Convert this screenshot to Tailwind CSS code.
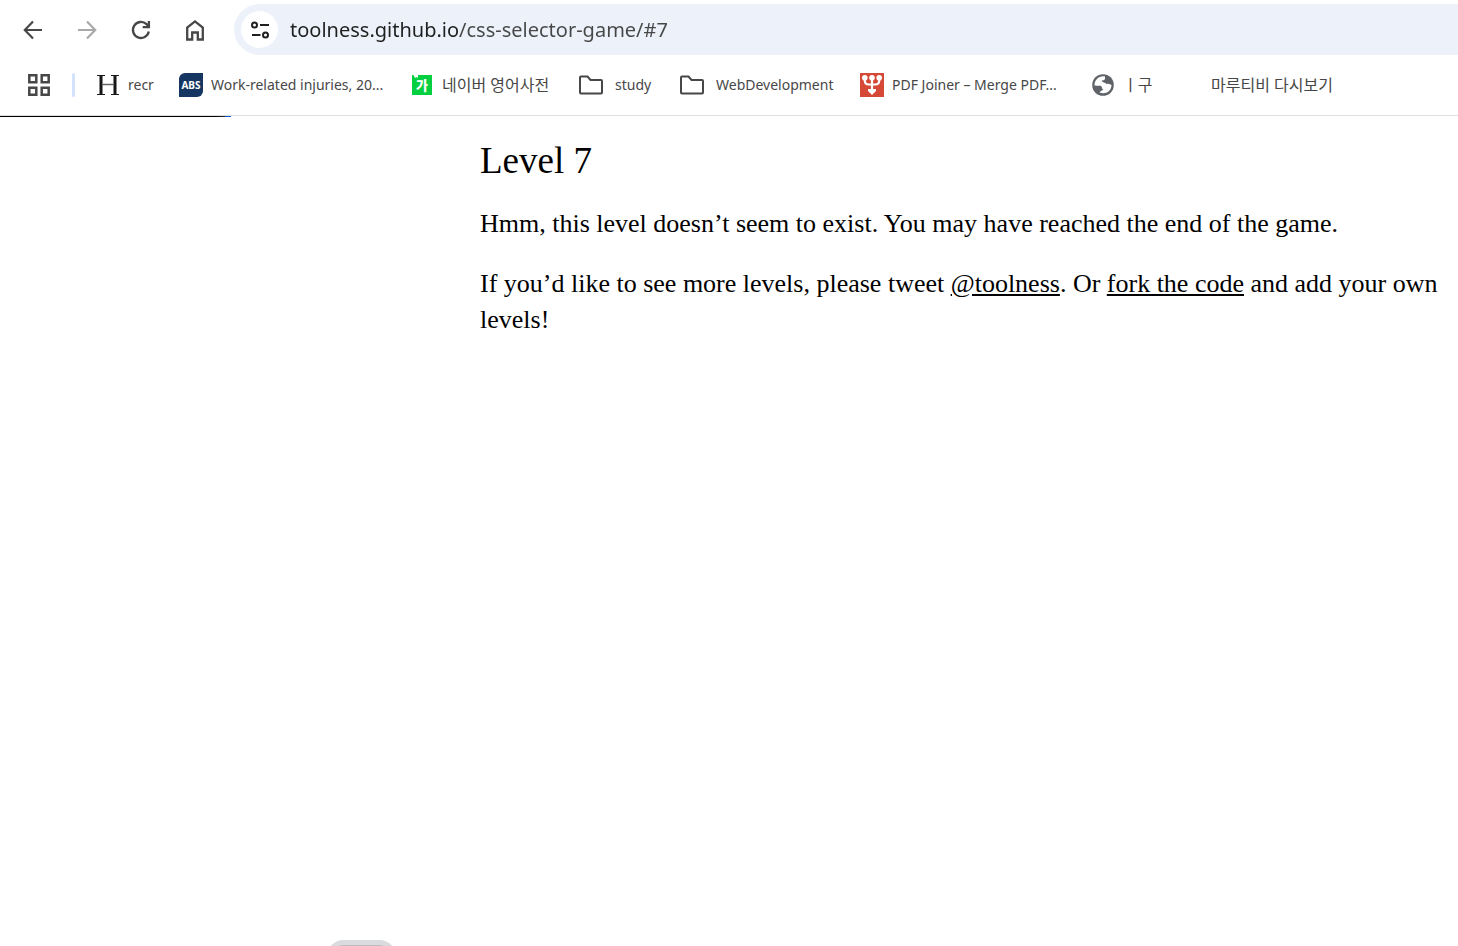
<!DOCTYPE html>
<html lang="en">
<head>
<meta charset="utf-8">
<meta name="viewport" content="width=device-width, initial-scale=1">
<title>CSS Selector Game</title>
<script src="https://cdn.jsdelivr.net/npm/@tailwindcss/browser@4"></script>
</head>
<body class="flex h-screen flex-col overflow-hidden bg-white font-['Noto_Sans','Noto_Sans_CJK_KR',sans-serif] text-[#474747]">
<header class="border-b border-[#dfdfdf]">
  <div class="flex items-center pt-1">
    <nav aria-label="Navigation" class="flex shrink-0 gap-[27px] pl-5 pr-[25px]">
      <button aria-label="Back" class="size-[27px]"><svg viewBox="0 0 27 27" fill="none" stroke="#474747" stroke-width="2.2"><path d="M22 14H5.500M13 5.500L4.800 14L13 22.500"/></svg></button>
      <button aria-label="Forward" class="size-[27px]" disabled><svg viewBox="0 0 27 27" fill="none" stroke="#a9a9a9" stroke-width="2.2"><path d="M4 14h16.500M13 5.500L21.200 14L13 22.500"/></svg></button>
      <button aria-label="Reload" class="size-[27px]"><svg viewBox="0 0 27 27" fill="none" stroke="#474747" stroke-width="2.3"><path d="M20.800 15.500A8 8 0 1 1 18.500 8.200L20.500 10.200M20.900 5V11.200H14.700"/></svg></button>
      <button aria-label="Home" class="size-[27px]"><svg viewBox="0 0 27 27" fill="none" stroke="#474747" stroke-width="2.3"><path d="M5.200 23.500V11.500L13 5.400l7.800 6.100v12h-5V16.500h-5.600v7z"/></svg></button>
    </nav>
    <div class="flex h-[51px] min-w-0 flex-1 items-center gap-3 rounded-l-full bg-[#ecf1fa] pl-[7px]">
      <button aria-label="View site information" class="size-[37px] shrink-0 rounded-full bg-white"><svg viewBox="0 0 37 37" fill="none" stroke="#1f1f1f" stroke-width="2"><circle cx="13.500" cy="14" r="2.500"/><circle cx="24.500" cy="24" r="2.500"/><path d="M19 14h9M11 24h8.500"/></svg></button>
      <input aria-label="Address" type="text" value="toolness.github.io/css-selector-game/#7" class="h-9 min-w-0 flex-1 bg-linear-to-r from-[#1f1f1f] from-[169px] to-[#474747] to-[170px] bg-clip-text text-xl text-transparent caret-black outline-none">
    </div>
  </div>
  <nav aria-label="Bookmarks" class="flex h-[60px] items-center whitespace-nowrap pl-[27px] text-sm">
    <button aria-label="Apps" class="mr-[21px] size-6"><svg viewBox="0 0 24 24" fill="none" stroke="#474747" stroke-width="2.500"><path d="M2.300 2.300h7v7h-7zM14.700 2.300h7v7h-7zM2.300 14.700h7v7h-7zM14.700 14.700h7v7h-7z"/></svg></button>
    <span class="mr-[21px] h-6 w-[3px] rounded-full bg-[#d3e3fd]"></span>
    <a href="#" class="flex w-[83px] items-center gap-2">
      <svg class="size-6 shrink-0" viewBox="0 0 24 24" fill="none" stroke="#171717"><path d="M5 3v18M19 3v18" stroke-width="3"/><path d="M1 2.500h8M15 2.500h8M1 21.500h8M15 21.500h8" stroke-width="1.200"/><path d="M6 11.500h12" stroke="#666" stroke-width="1.500"/></svg><span>recr</span></a>
    <a href="#" class="flex w-[231px] items-center gap-2">
      <span class="flex size-6 shrink-0 items-center justify-center rounded-tl-md rounded-br-md bg-[#153660] text-[10px] font-bold text-white">ABS</span>Work-related injuries, 20...</a>
    <a href="#" class="flex w-[169px] items-center gap-2 text-base">
      <span class="relative flex size-6 shrink-0 items-center justify-center"><svg class="absolute inset-0" viewBox="0 0 24 24"><path fill="#03cf41" d="M2 2h1.500l1.500 3 1.500-1 1.500 1V2h14v20H2z"/></svg><span class="relative text-[13px] font-black leading-none text-white">가</span></span>네이버 영어사전</a>
    <a href="#" class="flex w-[101px] items-center gap-3">
      <svg class="size-6 shrink-0" viewBox="0 0 24 24" fill="none" stroke="#474747" stroke-width="2"><path d="M2 3.500h6.500l3 3.500H22q1 0 1 1v11.500q0 1-1 1H2q-1 0-1-1v-15q0-1 1-1z"/></svg>study</a>
    <a href="#" class="flex w-[180px] items-center gap-3">
      <svg class="size-6 shrink-0" viewBox="0 0 24 24" fill="none" stroke="#474747" stroke-width="2"><path d="M2 3.500h6.500l3 3.500H22q1 0 1 1v11.500q0 1-1 1H2q-1 0-1-1v-15q0-1 1-1z"/></svg>WebDevelopment</a>
    <a href="#" class="flex w-[231px] items-center gap-2">
      <svg class="size-6 shrink-0" viewBox="0 0 24 24"><path fill="#d64937" d="M0 0h24v24H0z"/><g fill="none" stroke="#fff" stroke-width="2.200"><path d="M4.800 5v2.500q0 4 4 4h6.400q4 0 4-4V5M12 5v13"/></g><g fill="#fff"><circle cx="4.800" cy="4.800" r="2.800"/><circle cx="12" cy="4.800" r="2.800"/><circle cx="19.200" cy="4.800" r="2.800"/><path d="M8 16h8v2l-4 4-4-4z"/></g></svg>PDF Joiner – Merge PDF...</a>
    <a href="#" class="flex w-[120px] items-center gap-2 text-base">
      <svg class="size-6 shrink-0" viewBox="0 0 24 24"><circle cx="12" cy="12" r="10.800" fill="#5f6368"/><path fill="#fff" d="M14 3.500C8 2.500 3.500 7 3.500 12.500c2 1 5-.5 6.500.5s.5 3 2.500 3.500c-1.500 1-3 1.500-4 3 6 2.500 12-1.500 12-7.500-1.500-.5-3-1.500-5-1-1-2-4-1-5-3.500 3 .5 4-1.500 3.500-4z"/><path fill="#5f6368" d="M4 12.500c2.500 1.500 5 1 6 2s-.5 3.500-1.500 4.500c-2.500-1-4.500-3.500-4.500-6.500zM14 4c3.500.8 6 3.500 6 7-2 0-4-2-5-1.500-2-.5-3-1-4-1.500 2.500.5 4-1.500 3-4z"/></svg>ㅣ구</a>
    <a href="#" class="text-base">마루티비 다시보기</a>
  </nav>
</header>
<div class="flex h-px w-[231px] shrink-0 justify-end bg-linear-to-r from-black from-[210px] to-[#303030] to-[225px]"><span class="w-1.5 bg-[#0b57d0]"></span></div>
<main class="flex-1 pl-[480px] pr-4 pt-[19px] font-['Liberation_Serif',serif] text-[26px] leading-9 text-black">
  <h1 class="mb-5 text-[37px] leading-[50px]">Level 7</h1>
  <p class="mb-6">Hmm, this level doesn’t seem to exist. You may have reached the end of the game.</p>
  <p>If you’d like to see more levels, please tweet <a href="#" class="underline">@toolness</a>. Or <a href="#" class="underline">fork the code</a> and add your own levels!</p>
</main>
<footer class="flex h-1.5 shrink-0 overflow-hidden pl-[326px]">
  <div class="h-12 w-[71px] shrink-0 rounded-[18px] border-[5px] border-[#dadbdf] bg-[#bdbdc0]"></div>
</footer>
</body>
</html>
